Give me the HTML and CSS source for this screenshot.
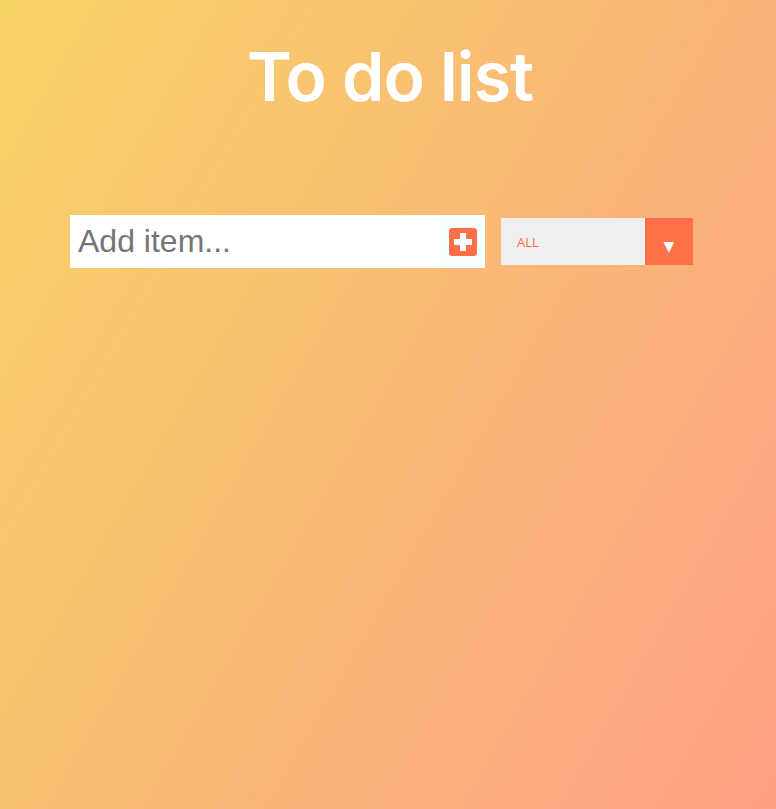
FILE: index.html
```html
<!DOCTYPE html>
<html>
<head>
<meta charset="utf-8">
<link rel="stylesheet" href="styles.css">
</head>
<body>
<header class="header">
  <h1 class="title">To do list</h1>
</header>
<form class="todo-form">
  <div class="add-box">
    <input class="todo-input" type="text" placeholder="Add item...">
    <button class="add-btn" type="button" aria-label="Add">
      <svg width="28" height="28" viewBox="0 0 28 28">
        <rect x="0" y="0" width="28" height="28" rx="3" fill="#ff6f47"/>
        <rect x="11" y="5" width="6" height="18" fill="#fff"/>
        <rect x="5" y="11" width="18" height="6" fill="#fff"/>
      </svg>
    </button>
  </div>
  <div class="select-box">
    <span class="select-label">ALL</span>
    <span class="select-arrow">▼</span>
  </div>
</form>
</body>
</html>
```
FILE: styles.css
```css
html, body {
  margin: 0;
  padding: 0;
}
body {
  min-height: 809px;
  background: linear-gradient(120deg, #f6d365 0%, #fda085 100%);
  font-family: "Liberation Sans", Arial, sans-serif;
}
.header {
  display: flex;
  justify-content: center;
  padding-top: 34px;
}
.title {
  margin: 0 0 0 4px;
  color: #fff;
  font-family: Inter, "Noto Sans", sans-serif;
  font-weight: 600;
  font-size: 68px;
  line-height: 84px;
  letter-spacing: -1px;
}
.todo-form {
  display: flex;
  align-items: center;
  gap: 16px;
  padding-left: 70px;
  margin-top: 97px;
}
.add-box {
  display: flex;
  width: 415px;
  height: 53px;
  background: #fff;
}
.todo-input {
  flex: 1;
  border: none;
  outline: none;
  padding: 0 0 0 8px;
  font-family: "Liberation Sans", Arial, sans-serif;
  font-size: 32px;
  color: #333;
  background: #fff;
  min-width: 0;
}
.todo-input::placeholder {
  color: #757575;
}
.add-btn {
  width: 44px;
  border: none;
  padding: 0;
  background: #f5fffd;
  display: flex;
  align-items: center;
  justify-content: center;
}
.add-btn svg {
  display: block;
  margin-left: 0;
}
.select-box {
  display: flex;
  width: 192px;
  height: 47px;
  background: #efefef;
}
.select-label {
  flex: 1;
  display: flex;
  align-items: center;
  padding-left: 16px;
  font-family: "Open Sans", sans-serif;
  font-size: 13px;
  color: #ff6f47;
}
.select-arrow {
  width: 48px;
  background: #ff6f47;
  color: #fff;
  display: flex;
  align-items: center;
  justify-content: center;
  font-size: 14px;
  padding-top: 8px;
  box-sizing: border-box;
  font-family: "DejaVu Sans", sans-serif;
}
```
